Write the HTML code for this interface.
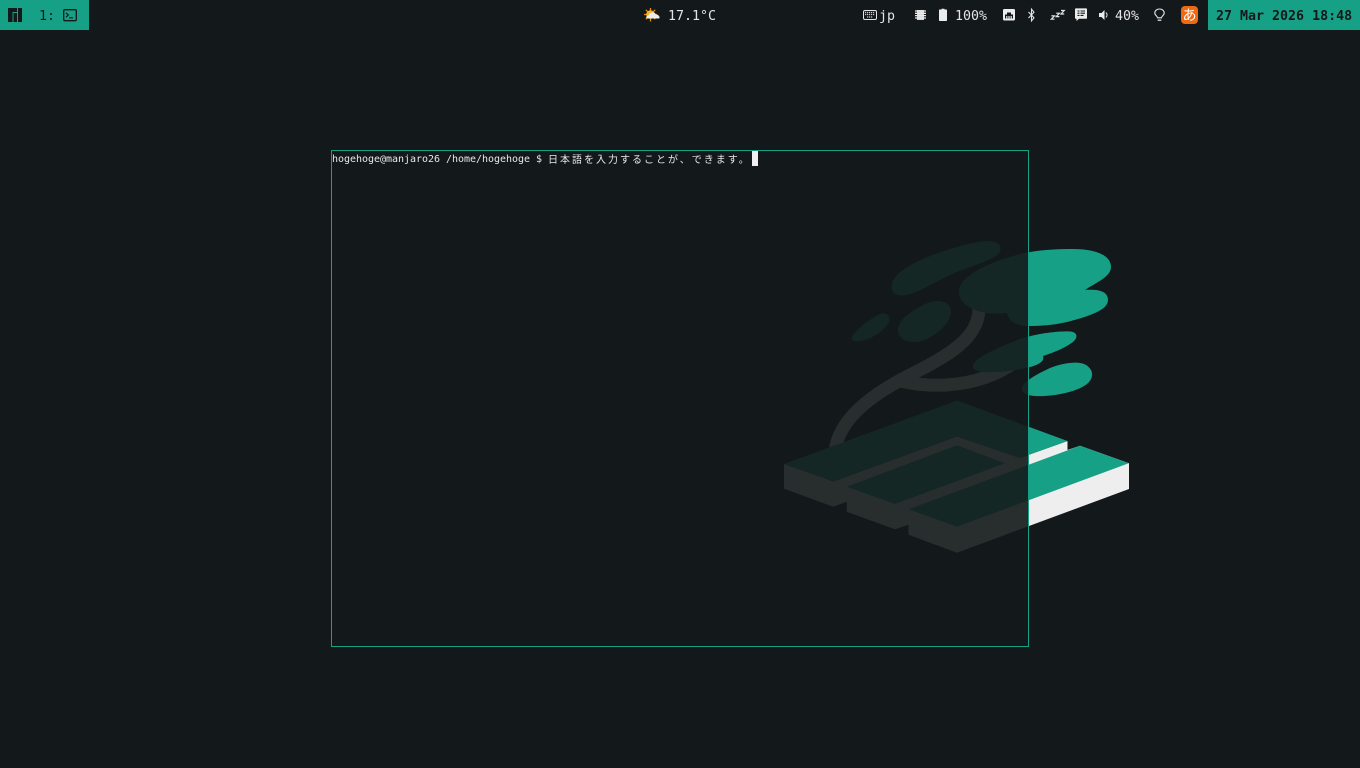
<!DOCTYPE html>
<html><head><meta charset="utf-8"><style>
html,body{margin:0;padding:0;width:1360px;height:768px;overflow:hidden;background:#13181b}
.t{position:absolute;white-space:pre;font-family:"DejaVu Sans Mono","Liberation Mono",monospace;font-size:13.3px;line-height:16px;top:9px;color:#e4e4e4}
.b{position:absolute;background:#16a085;top:0;height:30px}
svg{position:absolute;left:0;top:0}
</style></head><body>
<svg width="1360" height="768" viewBox="0 0 1360 768">
<defs>
<clipPath id="o"><rect x="1029" y="0" width="331" height="768"/></clipPath>
<g id="lv">
<path d="M892 284C895 269 925 257 950 249C970 243 985 240 993 241.5C1002 243 1003 251 996 256C985 263 965 268 950 275C935 282 920 292 906 295C896 297 890 292 892 284Z"/>
<path d="M959 292C958 278 985 264 1010 257C1030 250 1055 249 1073 249C1095 249 1111 255 1111 267C1111 277 1095 283 1085 290C1098 289 1108 291 1108 300C1108 310 1090 316 1067 322C1050 326 1035 326 1025 326C1015 325 1008 320 1007 313C995 314 985 314 975 310C965 306 959 300 959 292Z"/>
<path d="M898 330C898 320 910 312 925 304C938 298 951 301 951 312C951 322 938 334 925 340C910 345 898 340 898 330Z"/>
<path d="M852 337C856 329 870 319 880 314C887 311 891 317 889 322C886 329 875 337 865 340C857 342 850 342 852 337Z"/>
<path d="M973 365C975 358 995 349 1015 341C1035 333 1060 331 1070 331.500C1078 332 1078 338 1073 342C1065 348 1055 352 1043 356C1045 362 1037 365 1030 367C1015 371 995 373 985 372C977 371.500 972 370 973 365Z"/>
<path d="M1022 388C1023 382 1035 375 1050 368C1065 362 1080 361 1086 365C1094 370 1094 378 1087 384C1078 391 1060 395 1045 396C1035 396.500 1021 396 1022 388Z"/>
</g>
<g id="top">
<path d="M784 464L957 400.500L1067.500 441L1020 458L957 436.500L833.300 481.500Z"/>
<path d="M846.700 486.700L957 445.300L1005 463.300L895 504Z"/>
<path d="M908.500 509.300L1080 445.700L1128.700 463.300L957 526.700Z"/>
</g>
<path id="body" d="M784 464L784 488.700L833.300 506.700L846.700 501.700L846.700 511.700L895 529.300L908.500 524.700L908.500 534.700L957 552.700L1129 489L1129 463.300L1080 445.700L1067.500 450L1067.500 441L1020 458L957 436.500L833.300 481.500Z"/>
</defs>
<path d="M979 308C979 338 950 355 906 377C870 396 838 420 835 452" fill="none" stroke="#282e2e" stroke-width="13"/>
<path d="M896 380C935 390 985 387 1020 358" fill="none" stroke="#282e2e" stroke-width="13"/>
<use href="#body" fill="#282e2e"/>
<use href="#top" fill="#142725"/>
<use href="#lv" fill="#142725"/>
<g clip-path="url(#o)">
<use href="#body" fill="#eeeeee"/>
<use href="#top" fill="#16a085"/>
<use href="#lv" fill="#16a085"/>
</g>
<rect x="331.500" y="150.500" width="697" height="496" fill="none" stroke="#16a085" stroke-width="1"/>
</svg>

<div class="b" style="left:0;width:89px"></div>
<div class="b" style="left:1208px;width:152px"></div>
<div class="t" style="left:39px;color:#13181b">1:</div>
<div class="t" style="left:668px">17.1°C</div>
<div class="t" style="left:879px">jp</div>
<div class="t" style="left:955px">100%</div>
<div class="t" style="left:1115px">40%</div>
<div class="t" style="left:1216px;color:#13181b;font-weight:bold">27 Mar 2026 18:48</div>
<div class="t" style="left:332px;top:152px;font-size:10px;line-height:15px;letter-spacing:-.02px;color:#e8e8e8">hogehoge@manjaro26 /home/hogehoge $ </div>
<div class="t" style="left:548px;top:150.500px;font-size:10px;line-height:15px;letter-spacing:2px;color:#e8e8e8;font-family:'Noto Sans CJK JP',sans-serif">日本語を入力することが、できます。</div>
<div style="position:absolute;left:752px;top:151px;width:6px;height:15px;background:#f0f0f0"></div>

<svg width="1360" height="30" viewBox="0 0 1360 30">
<!-- manjaro -->
<g fill="#13181b">
<path d="M8 8H17V12H12.500V22H8Z"/><rect x="13.500" y="13" width="3.500" height="9"/><rect x="18" y="8" width="4" height="14"/>
</g>
<!-- terminal -->
<rect x="63.700" y="9.700" width="12.600" height="11" rx="1.200" fill="none" stroke="#13181b" stroke-width="1.300"/>
<path d="M66 12.800L68.300 15L66 17.200M69 17.800H73" fill="none" stroke="#13181b" stroke-width="1.200"/>
<!-- weather -->
<g stroke="#e88a10" stroke-width="1.300">
<path d="M650.500 8V21.500M644 14.500H657M645.800 9.800L655.200 19.200M655.200 9.800L645.800 19.200"/>
</g>
<circle cx="650.500" cy="14.500" r="4.300" fill="#f5b325"/>
<path d="M647.500 18.500C645.500 18.500 646 15.500 648.500 15.500C649.500 12 654.500 11 656 14.500C659 14.300 661 18.500 658.500 18.500Z" fill="#ececec"/>
<!-- keyboard -->
<rect x="863.500" y="10.500" width="13" height="9" rx="1.500" fill="none" stroke="#e4e4e4"/>
<path d="M865 12.500h10M865 14.500h10M867 17h6" stroke="#c8c8c8" stroke-width="1.200" stroke-dasharray="1.200 .8" fill="none"/>
<!-- cpu -->
<rect x="917" y="10" width="7" height="10" fill="#d8d8d8"/>
<path d="M915 11h11M915 13.300h11M915 15.600h11M915 18h11" stroke="#ececec" stroke-width="1.300"/>
<!-- battery -->
<path d="M941.500 9.500V8.800H944.500V9.500H946.300C946.800 9.500 947 9.800 947 10.200V20.300C947 20.700 946.800 21 946.300 21H939.700C939.200 21 939 20.700 939 20.300V10.200C939 9.800 939.200 9.500 939.700 9.500Z" fill="#ececec"/>
<!-- network -->
<rect x="1003" y="9" width="12" height="11.500" rx="1.200" fill="#ececec"/>
<path d="M1005 18.500V14.500H1007V12.500H1011V14.500H1013V18.500H1011.800V16H1010.600V18.500H1009.600V16H1008.400V18.500H1007.400V16H1006.200V18.500Z" fill="#13181b"/>
<!-- bluetooth -->
<path d="M1028.500 12L1034 17.800L1031.500 20.800V9.200L1034 12.200L1028.500 18" fill="none" stroke="#e4e4e4" stroke-width="1.100"/>
<!-- zzz -->
<path d="M1051.300 15.800h3.200L1051.300 19.200h3.200M1056.200 13.200h3.200L1056.200 16.600h3.200M1061 10.500h3.200L1061 14h3.200" fill="none" stroke="#e4e4e4" stroke-width="1.200"/>
<!-- chat -->
<path d="M1075 9.200C1075 8.700 1075.400 8.400 1076 8.400H1086C1086.600 8.400 1087 8.700 1087 9.200V18C1087 18.500 1086.600 18.800 1086 18.800H1079L1076.500 21V18.800H1076C1075.400 18.800 1075 18.500 1075 18Z" fill="#ececec"/>
<path d="M1077.500 11h2M1077.500 13.200h2M1077.500 15.400h2M1080.500 11h4.500M1080.500 13.200h4.500M1080.500 15.400h3" stroke="#13181b" stroke-width="1.100"/>
<!-- volume -->
<path d="M1099 13H1101.500L1104.500 10V20L1101.500 17H1099Z" fill="#ececec"/>
<path d="M1105.800 12.500C1107.500 13.800 1107.500 16.200 1105.800 17.500" fill="none" stroke="#e4e4e4" stroke-width="1"/>
<!-- bulb -->
<path d="M1157.500 17.800C1157.500 16.300 1154.800 15.300 1154.800 13C1154.800 10.500 1157 9 1159.500 9C1162 9 1164.200 10.500 1164.200 13C1164.200 15.300 1161.500 16.300 1161.500 17.800Z" fill="none" stroke="#e4e4e4" stroke-width="1.100"/>
<path d="M1157.700 20.200H1161.300" stroke="#e4e4e4" stroke-width="1.300"/>
<!-- ime badge -->
<rect x="1181" y="6" width="17" height="18" rx="4" fill="#ee6a12"/>
</svg>
<div class="t" style="left:1181px;top:6px;width:17px;height:18px;line-height:18px;text-align:center;font-size:14px;color:#fff;font-family:'Noto Sans CJK JP',sans-serif">あ</div>
</body></html>
